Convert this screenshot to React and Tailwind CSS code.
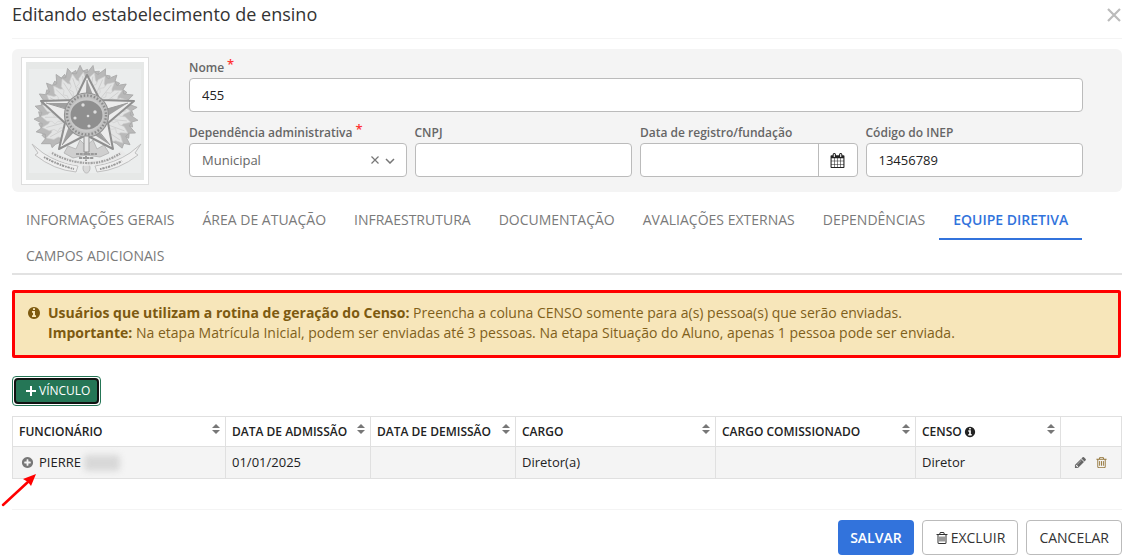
import { useState } from 'react';

// --- Data ---
const TABS = [
    'INFORMAÇÕES GERAIS', 'ÁREA DE ATUAÇÃO', 'INFRAESTRUTURA', 'DOCUMENTAÇÃO',
    'AVALIAÇÕES EXTERNAS', 'DEPENDÊNCIAS', 'EQUIPE DIRETIVA', 'CAMPOS ADICIONAIS',
];

const COLUMNS = [
    { id: 'funcionario', label: 'FUNCIONÁRIO', sortable: true, width: '' },
    { id: 'admissao', label: 'DATA DE ADMISSÃO', sortable: true, width: 'w-[145px]' },
    { id: 'demissao', label: 'DATA DE DEMISSÃO', sortable: true, width: 'w-[145px]' },
    { id: 'cargo', label: 'CARGO', sortable: true, width: 'w-[200px]' },
    { id: 'comissionado', label: 'CARGO COMISSIONADO', sortable: true, width: 'w-[200px]' },
    { id: 'censo', label: 'CENSO', sortable: true, info: true, width: 'w-[145px]' },
    { id: 'acoes', label: '', sortable: false, width: 'w-[61px]' },
];

const ROWS = [
    { id: 1, nome: 'PIERRE', admissao: '01/01/2025', demissao: '', cargo: 'Diretor(a)', comissionado: '', censo: 'Diretor' },
];

// --- Icons ---
const CIRCLE = 'm320-64q0 209-103 385.5t-279.5 279.5-385.5 103-385.5-103-279.5-279.5-103-385.5 103-385.5 279.5-279.5 385.5-103 385.5 103 279.5 279.5 103 385.5z';

const ICONS = {
    info: 'M1152 1376v-160q0-14-9-23t-23-9h-96v-512q0-14-9-23t-23-9h-320q-14 0-23 9t-9 23v160q0 14 9 23t23 9h96v320h-96q-14 0-23 9t-9 23v160q0 14 9 23t23 9h448q14 0 23-9t9-23zm-128-896v-160q0-14-9-23t-23-9h-192q-14 0-23 9t-9 23v160q0 14 9 23t23 9h192q14 0 23-9t9-23zm640 416q0 209-103 385.5t-279.5 279.5-385.5 103-385.5-103-279.5-279.5-103-385.5 103-385.5 279.5-279.5 385.5-103 385.5 103 279.5 279.5 103 385.5z',
    plusCircle: 'M1344 960v-128q0-26-19-45t-45-19h-256v-256q0-26-19-45t-45-19h-128q-26 0-45 19t-19 45v256h-256q-26 0-45 19t-19 45v128q0 26 19 45t45 19h256v256q0 26 19 45t45 19h128q26 0 45-19t19-45v-256h256q26 0 45-19t19-45z' + CIRCLE,
    pencil: 'M491 1536l91-91-235-235-91 91v107h128v128h107zm523-928q0-22-22-22-10 0-17 7l-542 542q-7 7-7 17 0 22 22 22 10 0 17-7l542-542q7-7 7-17zm-54-192l416 416-832 832h-416v-416zm683 96q0 53-37 90l-166 166-416-416 166-165q36-38 90-38 53 0 91 38l235 234q37 39 37 91z',
    trash: 'M704 736v576q0 14-9 23t-23 9h-64q-14 0-23-9t-9-23v-576q0-14 9-23t23-9h64q14 0 23 9t9 23zm256 0v576q0 14-9 23t-23 9h-64q-14 0-23-9t-9-23v-576q0-14 9-23t23-9h64q14 0 23 9t9 23zm256 0v576q0 14-9 23t-23 9h-64q-14 0-23-9t-9-23v-576q0-14 9-23t23-9h64q14 0 23 9t9 23zm128 724v-948h-896v948q0 22 7 40.5t14.5 27 10.5 8.5h832q3 0 10.5-8.5t14.5-27 7-40.5zm-672-1076h448l-48-117q-7-9-17-11h-317q-10 2-17 11zm928 32v64q0 14-9 23t-23 9h-96v948q0 83-47 143.5t-113 60.5h-832q-66 0-113-58.5t-47-141.5v-952h-96q-14 0-23-9t-9-23v-64q0-14 9-23t23-9h309l70-167q15-37 54-63t79-26h320q40 0 79 26t54 63l70 167h309q14 0 23 9t9 23z',
    calendar: 'M192 1664h288v-288h-288v288zm352 0h320v-288h-320v288zm-352-352h288v-320h-288v320zm352 0h320v-320h-320v320zm-352-384h288v-288h-288v288zm736 736h320v-288h-320v288zm-384-736h320v-288h-320v288zm768 736h288v-288h-288v288zm-384-352h320v-320h-320v320zm-352-864v-288q0-13-9.5-22.5t-22.5-9.5h-64q-13 0-22.5 9.5t-9.5 22.5v288q0 13 9.5 22.5t22.5 9.5h64q13 0 22.5-9.5t9.5-22.5zm736 864h288v-320h-288v320zm-384-384h320v-288h-320v288zm384 0h288v-288h-288v288zm32-480v-288q0-13-9.5-22.5t-22.5-9.5h-64q-13 0-22.5 9.5t-9.5 22.5v288q0 13 9.5 22.5t22.5 9.5h64q13 0 22.5-9.5t9.5-22.5zm384-64v1280q0 52-38 90t-90 38h-1408q-52 0-90-38t-38-90v-1280q0-52 38-90t90-38h128v-96q0-66 47-113t113-47h64q66 0 113 47t47 113v96h384v-96q0-66 47-113t113-47h64q66 0 113 47t47 113v96h128q52 0 90 38t38 90z',
};

const Icon = ({ name, className }) => (
    <svg viewBox="0 0 1792 1792" fill="currentColor" aria-hidden="true" className={className}>
        <path d={ICONS[name]} />
    </svg>
);

const SortIcon = () => (
    <svg viewBox="0 0 8 10" fill="currentColor" aria-hidden="true" className="h-[10px] w-2 shrink-0 text-[#777]">
        <path d="M4 0L8 4H0zM4 10L0 6H8z" />
    </svg>
);

// Leaves of the wreath, one per angle around the star
const LEAVES = Array.from({ length: 18 }, (_, i) => -212 + i * 14.3);

function Emblem() {
    return (
        <svg viewBox="0 0 118 118" role="img" aria-label="Brasão" className="h-[118px] w-[118px] bg-[#e6e8e7] blur-[0.4px]">
            <rect x="3" y="7" width="112" height="104" fill="#ebeded" />
            {LEAVES.map((a) => (
                <path
                    key={a}
                    transform={`translate(60 55) rotate(${a})`}
                    d="M30-9L40-7L45-8L44-4L52 1L46 3L47 8L40 7L30 8z"
                    fill="#b9b9b9"
                    stroke="#a9a9a9"
                    strokeWidth="0.8"
                />
            ))}
            {LEAVES.map((a) => (
                <g key={a} transform={`translate(60 55) rotate(${a + 3})`}>
                    <path d="M18 0L24-5L28-4L31-7L34-4L39-4L45 1L38 3L35 6L31 4L26 6z" fill="#e3e4e4" stroke="#cdcdcd" strokeWidth="0.6" />
                    <path d="M24 0L41 0" stroke="#c9c9c9" strokeWidth="0.7" />
                </g>
            ))}
            <path d="M38 91L42 84L50 87L54 78L60 84L67 78L71 87L78 83L83 91L74 95L60 93L47 96z" fill="#cfcfcf" stroke="#b0b0b0" strokeWidth="0.8" />
            {/* Five-pointed star */}
            <path d="M61 13L74 38L108 39L82 61L87 87L60 73L33 87L39 61L15 39L49 38z" fill="#ececec" stroke="#8f8f8f" strokeWidth="2" strokeLinejoin="round" />
            <path d="M61 18L69 38L60 44zM102 41L80 55L70 50zM84 83L64 70L66 62zM36 83L43 64L52 66zM20 41L48 41L52 50z" fill="#9f9f9f" />
            <path d="M61 18L60 50M102 41L60 53M84 83L60 53M36 83L60 53M20 41L60 53" stroke="#999" />
            <circle cx="60.500" cy="53" r="22" fill="#c0c0c0" stroke="#929292" strokeWidth="1.2" />
            <circle cx="60.500" cy="53" r="19.500" fill="none" stroke="#8c8c8c" strokeWidth="2.4" strokeDasharray="1.6 1.8" />
            <circle cx="60.500" cy="53" r="17" fill="#c9c9c9" />
            <ellipse cx="60.500" cy="53" rx="16" ry="14.500" fill="#8f8f8f" />
            <g fill="#dedede">
                <circle cx="57" cy="43" r="1.700" />
                <circle cx="69" cy="50" r="1.700" />
                <circle cx="49" cy="56" r="1.600" />
                <circle cx="63" cy="64" r="1.600" />
                <circle cx="62" cy="54" r="1.300" />
            </g>
            {/* Sword */}
            <path d="M58 74H63V90H58z" fill="#e6e6e6" stroke="#8f8f8f" />
            <path d="M50 92H71M53 96H68M60 90V101" stroke="#999" strokeWidth="2" strokeDasharray="3 0.7" />
            <ellipse cx="60.500" cy="106" rx="3.500" ry="5" fill="#d9d9d9" stroke="#bcbcbc" />
            {/* Ribbons */}
            <path d="M6 82L17 91Q32 101 52 104L50 110Q28 108 9 93L12 91zM115 82L104 91Q89 101 69 104L71 110Q93 108 112 93L109 91z" fill="#efefef" stroke="#c0c0c0" />
            <path d="M25 88Q40 98 60 99T96 88L100 92Q81 104 60 104T21 92z" fill="#e9e9e9" />
            <path d="M26 91Q42 100 60 101T95 91" fill="none" stroke="#a2a2a2" strokeWidth="2.2" strokeDasharray="1.4 1 2.2 0.8" />
            <path d="M18 95Q32 103 48 107M74 107Q85 105 96 99" fill="none" stroke="#999" strokeWidth="2" strokeDasharray="1.6 0.8 2.4 1" />
        </svg>
    );
}

// --- Form helpers ---
const inputClass = 'h-[34px] w-full rounded border border-[#bbb] bg-white px-3 text-[13px] text-[#222]';

const Field = ({ id, label, required, className, children }) => (
    <div className={className}>
        <label htmlFor={id} className="flex h-[21px] items-center gap-[3px] text-xs font-semibold text-[#666]">
            {label}
            {required && <span className="-mt-[7px] text-[13px] leading-3 text-[#f33]">*</span>}
        </label>
        {children}
    </div>
);

export default function App() {
    const [activeTab, setActiveTab] = useState('EQUIPE DIRETIVA');
    const [dependencia, setDependencia] = useState('Municipal');

    return (
        <main className="bg-white px-3 font-['Open_Sans',sans-serif] text-[#222]">
            <header className="flex h-[39px] items-start justify-between border-b border-[#f4f4f4]">
                <h1 className="text-lg leading-7 text-[#333]">Editando estabelecimento de ensino</h1>
                <button type="button" aria-label="Fechar" className="mt-2 mr-[1px] text-[#bbb]">
                    <svg viewBox="0 0 14 14" className="h-[14px] w-[14px]" stroke="currentColor" strokeWidth="2.200">
                        <path d="M1 1L13 13M13 1L1 13" />
                    </svg>
                </button>
            </header>

            {/* School data */}
            <section className="mt-[10px] flex gap-10 rounded-md bg-[#f4f4f4] pt-2 pr-[39px] pb-[7px] pl-[9px]">
                <div className="h-32 w-32 shrink-0 border border-[#ddd] bg-white p-1">
                    <Emblem />
                </div>
                <div className="grid grow grid-cols-4 content-start gap-x-2 gap-y-[10px]">
                    <Field id="nome" label="Nome" required className="col-span-4">
                        <input id="nome" type="text" defaultValue="455" className={inputClass} />
                    </Field>
                    <Field id="dependencia" label="Dependência administrativa" required>
                        <div className="relative">
                            <select
                                id="dependencia"
                                value={dependencia}
                                onChange={(e) => setDependencia(e.target.value)}
                                className="h-[34px] w-full appearance-none rounded border border-[#bbb] bg-white px-3 pt-[2px] text-[13px] text-[#666]"
                            >
                                <option value=""></option>
                                <option>Municipal</option>
                                <option>Estadual</option>
                                <option>Federal</option>
                            </select>
                            <button
                                type="button"
                                aria-label="Limpar"
                                onClick={() => setDependencia('')}
                                className="absolute top-[13px] right-7 text-[#777]"
                            >
                                <svg viewBox="0 0 8 8" className="h-2 w-2" stroke="currentColor" strokeWidth="1.2">
                                    <path d="M0.500 0.500L7.500 7.500M7.500 0.500L0.500 7.500" />
                                </svg>
                            </button>
                            <svg viewBox="0 0 10 6" className="pointer-events-none absolute top-[15px] right-3 h-[6px] w-[10px] text-[#777]" fill="none" stroke="currentColor" strokeWidth="1.5">
                                <path d="M1 1L5 5L9 1" />
                            </svg>
                        </div>
                    </Field>
                    <Field id="cnpj" label="CNPJ">
                        <input id="cnpj" type="text" className={inputClass} />
                    </Field>
                    <Field id="registro" label="Data de registro/fundação">
                        <div className="flex h-[34px] overflow-hidden rounded border border-[#bbb] bg-white">
                            <input id="registro" type="text" className="min-w-0 grow px-3 text-[13px]" />
                            <button type="button" aria-label="Abrir calendário" className="flex w-[39px] shrink-0 items-center justify-center border-l border-[#bbb]">
                                <Icon name="calendar" className="h-[15px] w-[15px]" />
                            </button>
                        </div>
                    </Field>
                    <Field id="inep" label="Código do INEP">
                        <input id="inep" type="text" defaultValue="13456789" className={inputClass} />
                    </Field>
                </div>
            </section>

            {/* Tabs */}
            <nav className="mt-3 flex flex-wrap gap-y-[3px] border-b-2 border-[#e2e2e2]">
                {TABS.map((tab) => (
                    <div key={tab} className="h-[33px]">
                        <button
                            type="button"
                            onClick={() => setActiveTab(tab)}
                            className={
                                tab === activeTab
                                    ? 'h-9 border-b-2 border-[#3273dc] px-[14px] pb-[2px] text-sm font-semibold text-[#3273dc]'
                                    : 'h-9 border-b-2 border-transparent px-[14px] pb-[2px] text-sm text-[#7a7a7a]'
                            }
                        >
                            {tab}
                        </button>
                    </div>
                ))}
            </nav>

            {/* Census notice */}
            <div role="note" className="mt-[15px] mr-[1px] flex gap-[7px] rounded-xs border-3 border-[#f00] bg-[#f7e6ba] px-3 pt-[10px] pb-3 text-sm leading-5 text-[#80601a]">
                <Icon name="info" className="mt-[3px] h-[14px] w-[14px] shrink-0 text-[#7d5a10]" />
                <div>
                    <p><strong className="font-bold text-[#7d5a10]">Usuários que utilizam a rotina de geração do Censo:</strong> Preencha a coluna CENSO somente para a(s) pessoa(s) que serão enviadas.</p>
                    <p><strong className="font-bold text-[#7d5a10]">Importante:</strong> Na etapa Matrícula Inicial, podem ser enviadas até 3 pessoas. Na etapa Situação do Aluno, apenas 1 pessoa pode ser enviada.</p>
                </div>
            </div>

            {/* Green button shown with its focus ring */}
            <div className="mt-[18px] flex">
                <div className="rounded border border-[#257656] p-[1px]">
                    <button type="button" className="flex h-[26px] items-center gap-[3px] rounded-sm border-2 border-[#111] bg-[#257656] pr-[7px] pl-[10px] text-xs text-white">
                        <svg viewBox="0 0 10 10" className="h-[10px] w-[10px]" stroke="currentColor" strokeWidth="2" aria-hidden="true">
                            <path d="M5 0V10M0 5H10" />
                        </svg>
                        VÍNCULO
                    </button>
                </div>
            </div>

            {/* Staff table */}
            <table className="mt-[10px] w-full table-fixed border-collapse text-left">
                <thead>
                    <tr className="h-[30px]">
                        {COLUMNS.map((col) => (
                            <th key={col.id} scope="col" className={`border border-[#e0e0e0] pr-[5px] pl-[6px] text-xs font-semibold text-[#222] ${col.width}`}>
                                <div className="flex items-center justify-between">
                                    <span className="flex items-center gap-[2px] whitespace-nowrap">
                                        {col.label}
                                        {col.info && <Icon name="info" className="h-3 w-3" />}
                                    </span>
                                    {col.sortable && (
                                        <button type="button" aria-label={`Ordenar por ${col.label}`} className="-mt-[5px]">
                                            <SortIcon />
                                        </button>
                                    )}
                                </div>
                            </th>
                        ))}
                    </tr>
                </thead>
                <tbody>
                    {ROWS.map((row) => (
                        <tr key={row.id} className="h-8 bg-[#f4f4f4] text-[13px] [&>td]:border [&>td]:border-[#e0e0e0] [&>td]:px-[6px]">
                            <td>
                                <div className="relative flex items-center gap-[5px] pl-[2px]">
                                    <button type="button" aria-label="Expandir" className="text-[#777]">
                                        <Icon name="plusCircle" className="h-[13px] w-[13px]" />
                                    </button>
                                    <span>{row.nome}</span>
                                    <span className="-ml-[2px] h-4 w-9 rounded bg-[#d8d8d8] blur-[3px]"></span>
                                    {/* Red arrow pointing at the expand button */}
                                    <svg viewBox="0 0 36 34" className="pointer-events-none absolute top-[20px] -left-[18px] h-[34px] w-9" aria-hidden="true">
                                        <path d="M2 32L28 8" stroke="#f00" strokeWidth="2.500" strokeLinecap="round" />
                                        <path d="M35 1L30 13L27 9L22 6z" fill="#f00" />
                                    </svg>
                                </div>
                            </td>
                            <td>{row.admissao}</td>
                            <td>{row.demissao}</td>
                            <td>{row.cargo}</td>
                            <td>{row.comissionado}</td>
                            <td>{row.censo}</td>
                            <td>
                                <div className="flex items-center justify-center gap-2">
                                    <button type="button" aria-label="Editar" className="text-[#666]">
                                        <Icon name="pencil" className="h-[13px] w-[13px]" />
                                    </button>
                                    <button type="button" aria-label="Remover" className="text-[#94763a]">
                                        <Icon name="trash" className="h-[13px] w-[13px]" />
                                    </button>
                                </div>
                            </td>
                        </tr>
                    ))}
                </tbody>
            </table>

            <footer className="mt-[30px] flex justify-end gap-2 border-t border-[#f4f4f4] pt-[10px]">
                <button type="button" className="h-[35px] rounded bg-[#3273dc] px-3 text-sm font-semibold text-white">SALVAR</button>
                <button type="button" className="flex h-[35px] items-center gap-[2px] rounded border border-[#bbb] bg-white px-3 text-sm text-[#333]">
                    <Icon name="trash" className="h-[14px] w-[14px]" />
                    EXCLUIR
                </button>
                <button type="button" className="h-[35px] rounded border border-[#bbb] bg-white px-3 text-sm text-[#333]">CANCELAR</button>
            </footer>
        </main>
    );
}
